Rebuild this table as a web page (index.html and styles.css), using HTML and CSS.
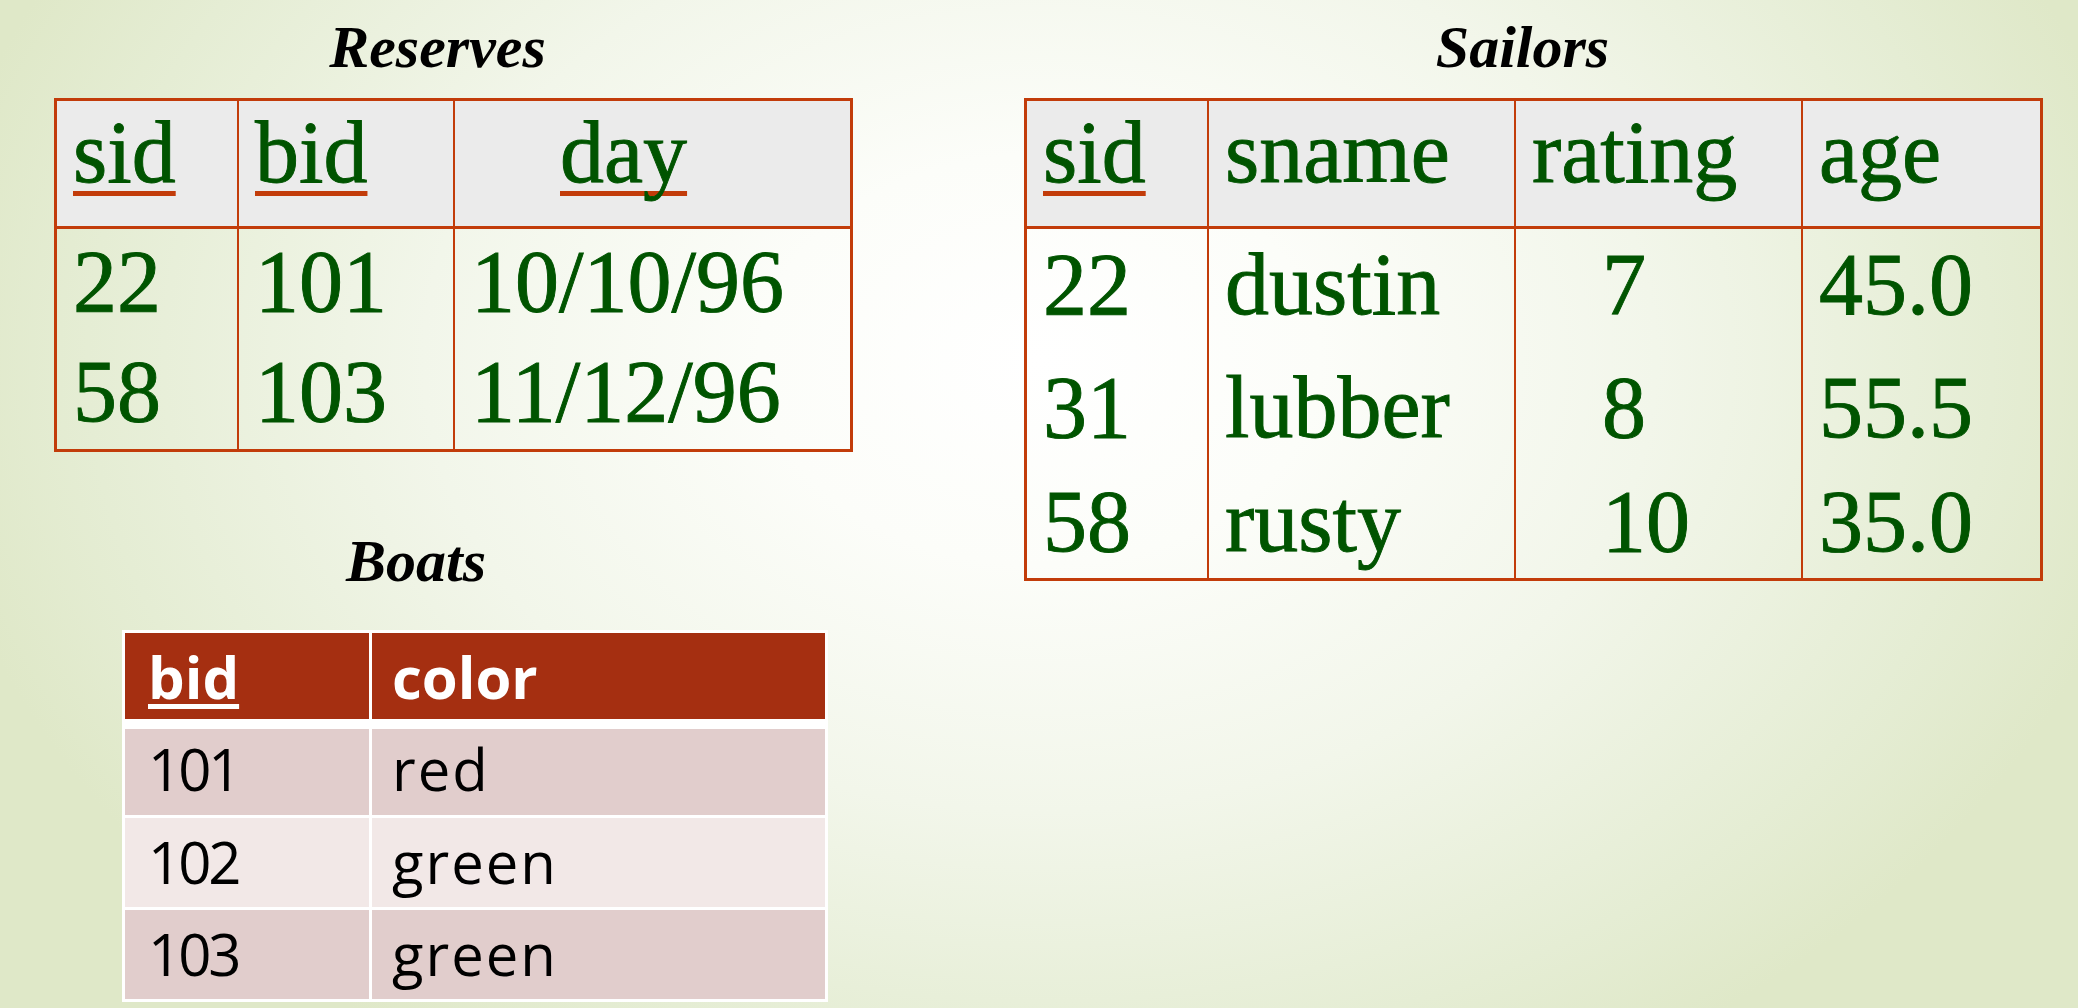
FILE: index.html
```html
<!DOCTYPE html>
<html lang="en">
<head>
<meta charset="utf-8">
<title>Relations</title>
<link rel="stylesheet" href="styles.css">
</head>
<body>
<div class="slide">
  <div class="col-left">
    <section class="relation">
      <h2 class="title title-reserves">Reserves</h2>
      <table class="rel-table reserves-table">
        <thead>
          <tr>
            <th class="w1"><span class="key">sid</span></th>
            <th class="w2"><span class="key">bid</span></th>
            <th class="day"><span class="key">day</span></th>
          </tr>
        </thead>
        <tbody>
          <tr class="rs1"><td>22</td><td>101</td><td>10/10/96</td></tr>
          <tr class="rs2"><td>58</td><td>103</td><td>11/12/96</td></tr>
        </tbody>
      </table>
    </section>

    <section class="relation boats-section">
      <h2 class="title title-boats">Boats</h2>
      <table class="boats-table">
        <thead>
          <tr>
            <th class="bw1"><span class="bkey">bid</span></th>
            <th>color</th>
          </tr>
        </thead>
        <tbody>
          <tr class="b1"><td>101</td><td>red</td></tr>
          <tr class="b2"><td>102</td><td>green</td></tr>
          <tr class="b3"><td>103</td><td>green</td></tr>
        </tbody>
      </table>
    </section>
  </div>

  <div class="col-right">
    <section class="relation">
      <h2 class="title title-sailors">Sailors</h2>
      <table class="rel-table sailors-table">
        <thead>
          <tr>
            <th class="sw1"><span class="key">sid</span></th>
            <th class="sw2">sname</th>
            <th class="sw3">rating</th>
            <th class="sw4">age</th>
          </tr>
        </thead>
        <tbody>
          <tr class="ss1"><td>22</td><td>dustin</td><td class="num">7</td><td>45.0</td></tr>
          <tr class="ss2"><td>31</td><td>lubber</td><td class="num">8</td><td>55.5</td></tr>
          <tr class="ss3"><td>58</td><td>rusty</td><td class="num">10</td><td>35.0</td></tr>
        </tbody>
      </table>
    </section>
  </div>
</div>
</body>
</html>
```

FILE: styles.css
```css
html, body {
  margin: 0;
  padding: 0;
}

body {
  width: 2078px;
  height: 1008px;
  overflow: hidden;
  font-family: "Liberation Serif", serif;
  background:
    radial-gradient(ellipse 1120px 820px at 1040px 360px,
      #ffffff 0%,
      #fcfdf9 25%,
      #f2f6ea 55%,
      #e5edd4 85%,
      #dfe8c8 100%);
}

.slide {
  display: flex;
  gap: 171px;
  padding: 17px 0 0 54px;
}

.col-left {
  width: 799px;
  display: flex;
  flex-direction: column;
}

.col-right {
  width: 1019px;
  display: flex;
  flex-direction: column;
}

.title {
  margin: 0 0 21px;
  height: 60px;
  font: italic bold 60px/60px "Liberation Serif", serif;
  color: #000;
  text-align: center;
}

.title-reserves { padding-right: 32px; }
.title-sailors { padding-right: 22px; }
.title-boats { padding-right: 75px; margin-bottom: 39px; }

.boats-section { margin-top: 79px; }

/* Serif relation tables (Reserves, Sailors) */
.rel-table {
  box-sizing: border-box;
  border-collapse: separate;
  border-spacing: 0;
  border: 3px solid #c23c0a;
  table-layout: fixed;
  font-size: 88px;
  line-height: 100px;
  color: #005400;
  -webkit-text-stroke: 0.9px #005400;
}

.reserves-table { width: 799px; }
.sailors-table { width: 1019px; }

.rel-table th,
.rel-table td {
  box-sizing: border-box;
  padding: 0 0 0 16px;
  text-align: left;
  font-weight: normal;
  vertical-align: top;
  white-space: nowrap;
  border-right: 2px solid #c23c0a;
}

.rel-table th:last-child,
.rel-table td:last-child {
  border-right: 0;
}

.rel-table th {
  background: #ebebeb;
  border-bottom: 3px solid #c23c0a;
  padding-top: 2px;
  padding-bottom: 23px;
}

.key {
  text-decoration: underline;
  text-decoration-color: #c23c0a;
  text-decoration-thickness: 5px;
  text-underline-offset: 9px;
  text-decoration-skip-ink: none;
}

.rel-table th.day { padding-left: 105px; }
.rel-table td.num { padding-left: 86px; }

.w1 { width: 182px; }
.w2 { width: 216px; }

.sw1 { width: 182px; }
.sw2 { width: 307px; }
.sw3 { width: 287px; }

.rs1 td { padding-top: 3px; padding-bottom: 6px; }
.rs2 td { padding-top: 4px; padding-bottom: 7px; }

.ss1 td { padding-top: 6px; padding-bottom: 20px; }
.ss2 td { padding-top: 3px; padding-bottom: 8px; }
.ss3 td { padding-top: 6px; padding-bottom: 6px; }

/* Boats table */
.boats-table {
  box-sizing: border-box;
  width: 706px;
  margin-left: 68px;
  border-collapse: separate;
  border-spacing: 0;
  border: 3px solid #ffffff;
  background: #ffffff;
  table-layout: fixed;
  font-family: "Open Sans", sans-serif;
  font-size: 58px;
  line-height: 58px;
  color: #000;
}

.boats-table th,
.boats-table td {
  box-sizing: border-box;
  padding: 0 0 0 20px;
  text-align: left;
  vertical-align: top;
  white-space: nowrap;
}

.boats-table td { letter-spacing: 2px; }

.boats-table th:first-child,
.boats-table td:first-child {
  border-right: 3px solid #ffffff;
  padding-left: 23px;
}

.boats-table td:first-child { letter-spacing: -3px; }

.bw1 { width: 247px; }

.boats-table th {
  background: #a52f11;
  color: #ffffff;
  font-weight: bold;
  padding-top: 15px;
  padding-bottom: 13px;
  border-bottom: 10px solid #ffffff;
}

.bkey {
  text-decoration: underline;
  text-decoration-color: #ffffff;
  text-decoration-thickness: 5px;
  text-underline-offset: 5px;
}

.b1 td { background: #e1cdcc; padding-top: 11px; padding-bottom: 17px; border-bottom: 3px solid #ffffff; }
.b2 td { background: #f2e8e7; padding-top: 15px; padding-bottom: 16px; border-bottom: 3px solid #ffffff; }
.b3 td { background: #e1cdcc; padding-top: 15px; padding-bottom: 16px; }
```
